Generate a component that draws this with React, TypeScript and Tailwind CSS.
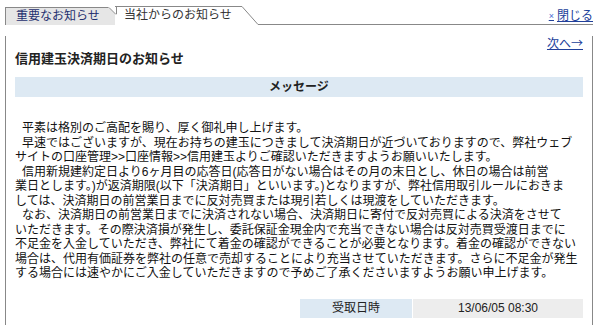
const lines: { text: string; indent?: boolean }[] = [
  { text: '平素は格別のご高配を賜り、厚く御礼申し上げます。', indent: true },
  { text: '早速ではございますが、現在お持ちの建玉につきまして決済期日が近づいておりますので、弊社ウェブ', indent: true },
  { text: 'サイトの口座管理>>口座情報>>信用建玉よりご確認いただきますようお願いいたします。' },
  { text: '信用新規建約定日より6ヶ月目の応答日(応答日がない場合はその月の末日とし、休日の場合は前営', indent: true },
  { text: '業日とします。)が返済期限(以下「決済期日」といいます。)となりますが、弊社信用取引ルールにおきま' },
  { text: 'しては、決済期日の前営業日までに反対売買または現引若しくは現渡をしていただきます。' },
  { text: 'なお、決済期日の前営業日までに決済されない場合、決済期日に寄付で反対売買による決済をさせて', indent: true },
  { text: 'いただきます。その際決済損が発生し、委託保証金現金内で充当できない場合は反対売買受渡日までに' },
  { text: '不足金を入金していただき、弊社にて着金の確認ができることが必要となります。着金の確認ができない' },
  { text: '場合は、代用有価証券を弊社の任意で売却することにより充当させていただきます。さらに不足金が発生' },
  { text: 'する場合には速やかにご入金していただきますので予めご了承くださいますようお願い申上げます。' },
];

function TabCorner() {
  // top-right cut of the inactive tab, plus the short left edge of the active one
  return (
    <svg className="absolute -top-px right-[-2px] h-[8px] w-[9px]" viewBox="0 0 9 8">
      <polygon points="0,0 9,0 9,8 7,7" fill="#ffffff" />
      <line x1="1" y1="0.5" x2="8" y2="7.5" stroke="#888888" strokeWidth="1" />
      <line x1="8.5" y1="0" x2="8.5" y2="7" stroke="#888888" strokeWidth="1" />
    </svg>
  );
}

export default function App() {
  return (
    <div className="h-[325px] w-[602px] overflow-hidden bg-white font-['Liberation_Sans','Noto_Sans_CJK_JP',sans-serif] text-[12px] text-[#111]">
      <div className="pl-[5px] pr-[9px] pt-[6px]">
        {/* tabs */}
        <div className="flex h-[19px] items-start">
          <div className="relative mt-px h-[18px] w-[110px] border-l border-t border-[#888] bg-[#e6e6e6] pl-[10px] leading-[16px] text-[#1f2f6f]">
            重要なお知らせ
            <TabCorner />
          </div>
          <div className="h-[19px] w-[127px] border-t border-[#888] bg-white pl-[9px] leading-[17px] text-[#333]">
            当社からのお知らせ
          </div>
          <svg className="h-[19px] w-[16px] shrink-0" viewBox="0 0 16 19">
            <line x1="0" y1="0.5" x2="16" y2="18.5" stroke="#888888" strokeWidth="1" />
          </svg>
          <div className="flex h-[19px] flex-1 justify-end border-b border-[#888] pt-[2px]">
            <a href="#" className="flex items-center gap-[3px] leading-[14px] text-[#21409a] underline">
              <span className="text-[9px] text-[#4a6ad0]">×</span>
              閉じる
            </a>
          </div>
        </div>

        {/* content */}
        <div className="h-[310px] border-l border-r border-[#888] px-[9px]">
          <div className="mt-[11px] flex justify-end">
            <a href="#" className="leading-[14px] text-[#21409a] underline">
              次へ<span className="font-['Noto_Sans_CJK_JP',sans-serif]">→</span>
            </a>
          </div>
          <h2 className="text-[13px] font-bold leading-[16px] text-[#222]">信用建玉決済期日のお知らせ</h2>
          <div className="mt-[10px] flex h-[20px] items-center justify-center bg-[#dde9f3] font-bold text-[#222]">
            メッセージ
          </div>
          <div className="mt-[24px] leading-[14.5px]">
            {lines.map((l, i) => (
              <div key={i} className={`whitespace-nowrap ${l.indent ? 'pl-[7px]' : ''}`}>
                {l.text}
              </div>
            ))}
          </div>
          <div className="mt-[18px] flex justify-end gap-px">
            <div className="flex h-[19px] w-[112px] items-center justify-center bg-[#dde9f3] text-[#222]">受取日時</div>
            <div className="flex h-[19px] w-[170px] items-center justify-center bg-[#ededed] text-[#222]">13/06/05 08:30</div>
          </div>
        </div>
      </div>
    </div>
  );
}
